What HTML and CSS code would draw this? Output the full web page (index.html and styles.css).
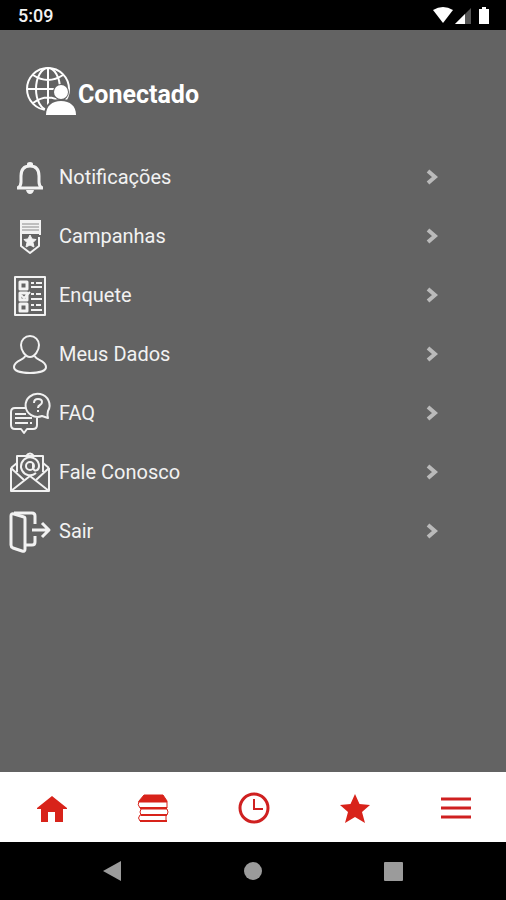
FILE: index.html
```html
<!DOCTYPE html>
<html lang="pt-BR">
<head>
  <meta charset="UTF-8" />
  <meta name="viewport" content="width=device-width, initial-scale=1.0"/>
  <title>Conectado</title>
  <link rel="stylesheet" href="styles.css">
</head>
<body>
  <div class="status-bar">
    <span class="time">5:09</span>
    <svg class="status-icons" width="58" height="20" viewBox="0 0 58 20" fill="#fff">
      <path d="M0 5Q10-1 20 5L10 18z" />
      <path d="M38 3v16H22z" fill="#555" />
      <path d="M32 9v10H22z" />
      <path d="M46 4h3V2h4v2h3v15H46z" />
    </svg>
  </div>

  <main>
    <header class="brand">
      <svg width="50" height="50" viewBox="0 0 50 50" fill="none" stroke="#fff" stroke-width="2">
        <circle cx="22" cy="23" r="21" />
        <ellipse cx="22" cy="23" rx="12" ry="21" />
        <path d="M22 2v42M1 23h42M7 9q15 10 30 0M7 37q15-11 30 0" />
        <circle cx="35" cy="26" r="8" fill="#636363" stroke="none" />
        <path d="M18 50c0-11 6-17 17-17s16 6 16 17z" fill="#636363" stroke="none" />
        <circle cx="35" cy="26" r="7" fill="#fff" stroke="none" />
        <path d="M20 49c0-9 6-14 15-14s15 5 15 14z" fill="#fff" stroke="none" />
      </svg>
      <h1>Conectado</h1>
    </header>

    <nav class="menu">
      <a class="menu-item" href="#notificacoes">
        <svg class="menu-icon" viewBox="0 0 40 40">
          <path d="M8 31q3-2 3-6v-6C11 12 14 9 20 9s9 3 9 10v6q0 4 3 6" stroke-width="3" />
          <path d="M7 31h26" stroke-width="3" />
          <path d="M17 9V7q0-2 3-2t3 2v2zM16 33h8q-1 4-4 4t-4-4z" fill="#f2f2f2" stroke="none" />
        </svg>
        <span>Notificações</span>
        <svg class="chevron" viewBox="0 0 12 16"><path d="M2 2l7 6-7 6" /></svg>
      </a>
      <a class="menu-item" href="#campanhas">
        <svg class="menu-icon" viewBox="0 0 40 40">
          <path d="M10 4h21v14H10z" fill="#f2f2f2" stroke="none" />
          <path d="M12 8h17M12 11h17M12 14h17" stroke="#8a8a8a" stroke-width="1" />
          <path d="M11 17v13l9 7 9-7v-9M30 16v3" />
          <path d="M20 19l2 4 4 .5-3 3 1 4.500-4-2-4 2 1-4.500-3-3 4-.5z" fill="#f2f2f2" stroke-width="1" />
        </svg>
        <span>Campanhas</span>
        <svg class="chevron" viewBox="0 0 12 16"><path d="M2 2l7 6-7 6" /></svg>
      </a>
      <a class="menu-item" href="#enquete">
        <svg class="menu-icon" viewBox="0 0 40 40">
          <rect x="5" y="2" width="30" height="38" />
          <path d="M10 7h7v7h-7zM10 18h7v7h-7zM10 29h7v7h-7z" stroke-width="3" />
          <path d="M11 20l3 3 6-6" />
          <path d="M21 8h3M26 8h6M21 12h11M21 19h3M26 19h5M21 24h11M21 30h3M26 30h5M21 35h11" />
        </svg>
        <span>Enquete</span>
        <svg class="chevron" viewBox="0 0 12 16"><path d="M2 2l7 6-7 6" /></svg>
      </a>
      <a class="menu-item" href="#meus-dados">
        <svg class="menu-icon" viewBox="0 0 40 40">
          <path d="M20 2c5 0 9 4 9 9s-4 12-9 12-9-7-9-12 4-9 9-9z" />
          <path d="M15 22c0 4-11 4-11 11 0 4 7 6 16 6s16-2 16-6c0-7-11-7-11-11" />
        </svg>
        <span>Meus Dados</span>
        <svg class="chevron" viewBox="0 0 12 16"><path d="M2 2l7 6-7 6" /></svg>
      </a>
      <a class="menu-item" href="#faq">
        <svg class="menu-icon" viewBox="0 0 40 40">
          <path d="M16 15H5q-4 0-4 4v13q0 4 4 4h6l3 4 3-4h6q4 0 4-4v-7" />
          <path d="M5 21h11M5 25h17M5 30h13M20 30h2" />
          <path d="M38 18q-1 4 0 7l-6-2a12 11.500 0 1 1 6-5z" />
          <path d="M24 10q0-4 4-4t4 3q0 2-2 3t-2 3M28 17v2" />
        </svg>
        <span>FAQ</span>
        <svg class="chevron" viewBox="0 0 12 16"><path d="M2 2l7 6-7 6" /></svg>
      </a>
      <a class="menu-item" href="#fale-conosco">
        <svg class="menu-icon" viewBox="0 0 40 40">
          <path d="M1 16v23h38V16M1 16l13 12M39 16L26 28" />
          <path d="M1 39l19-15 19 15M1 16l6-5M39 16l-6-5" />
          <path d="M7 20V4h26v16M16 4q4-5 8 0" />
          <path d="M26 21a9 9 0 1 1 3-7c0 5-5 6-6 2v-5" />
          <circle cx="20" cy="14" r="4" />
        </svg>
        <span>Fale Conosco</span>
        <svg class="chevron" viewBox="0 0 12 16"><path d="M2 2l7 6-7 6" /></svg>
      </a>
      <a class="menu-item" href="#sair">
        <svg class="menu-icon icon-bold" viewBox="0 0 40 40">
          <path d="M4 3l10 3q1 0 1 2v30q0 3-3 2L3 37q-2-1-2-3V5q0-3 3-2z" />
          <path d="M4 2h18q3 0 3 3v8M16 34h6q3 0 3-3v-6M22 19h16M32 12l7 7-7 7" />
        </svg>
        <span>Sair</span>
        <svg class="chevron" viewBox="0 0 12 16"><path d="M2 2l7 6-7 6" /></svg>
      </a>
    </nav>
  </main>

  <nav class="tab-bar">
    <button type="button" aria-label="Início">
      <svg viewBox="0 0 32 32"><path d="M16 4L1 16v1h4v13h7V20h7v10h8V17h4v-1z" fill="#d8231a" /></svg>
    </button>
    <button type="button" aria-label="Biblioteca">
      <svg viewBox="0 0 32 32" fill="none" stroke="#d8231a" stroke-width="1">
        <path d="M7 3h19l4 6v1H2v-1z" fill="#d8231a" />
        <path d="M2 9q-2 4 1 7h26M30 10v6M4 17h26q2 3 0 6H4q-2-3 0-6zM29 23H3q-3 3 0 6h26M29 23v6" />
        <path d="M3 16h27M4 23h26M3 29h27" stroke-width="2" />
      </svg>
    </button>
    <button type="button" aria-label="Histórico">
      <svg viewBox="0 0 32 32" fill="none" stroke="#cf2020" stroke-width="3">
        <circle cx="16" cy="16" r="14" />
        <path d="M16 7v10h9" stroke-width="2" />
      </svg>
    </button>
    <button type="button" aria-label="Favoritos">
      <svg viewBox="0 0 32 32"><path d="M16 2l4.500 10L31 13l-8 7 3 11-10-6-10 6 3-11-8-7 10.500-1z" fill="#d8231a" /></svg>
    </button>
    <button type="button" aria-label="Menu">
      <svg viewBox="0 0 32 32" stroke="#cf2020" stroke-width="3"><path d="M1 7h30M1 16h30M1 25h30" /></svg>
    </button>
  </nav>

  <div class="system-bar">
    <button type="button" aria-label="Voltar">
      <svg viewBox="0 0 20 20"><path d="M19 0v20L1 10z" /></svg>
    </button>
    <button type="button" aria-label="Tela inicial">
      <svg viewBox="0 0 20 20"><circle cx="10" cy="10" r="9" /></svg>
    </button>
    <button type="button" aria-label="Recentes">
      <svg viewBox="0 0 20 20"><rect x="0" y="1" width="19" height="19" rx="1" /></svg>
    </button>
  </div>
</body>
</html>
```

FILE: styles.css
```css
* {
  box-sizing: border-box;
}

body {
  display: flex;
  flex-direction: column;
  min-height: 100vh;
  margin: 0;
  font-family: Roboto, sans-serif;
  color: #f2f2f2;
  background-color: #636363;
}

svg {
  display: block;
  flex-shrink: 0;
}

/* Status bar */
.status-bar {
  display: flex;
  align-items: center;
  justify-content: space-between;
  height: 30px;
  padding: 0 15px 0 18px;
  background-color: #000;
}

.time {
  font-size: 18px;
  font-weight: 500;
}

/* Logo */
main {
  flex: 1;
}

.brand {
  display: flex;
  align-items: center;
  gap: 2px;
  padding: 36px 26px 31px;
}

.brand h1 {
  margin: 8px 0 0;
  font-size: 25px;
  line-height: 30px;
  color: #fff;
}

/* Menu list */
.menu-item {
  display: flex;
  align-items: center;
  gap: 9px;
  height: 59px;
  padding: 0 68px 0 10px;
  font-size: 20px;
  color: inherit;
  text-decoration: none;
}

.menu-icon {
  width: 40px;
  height: 40px;
  overflow: visible;
  fill: none;
  stroke: #f2f2f2;
  stroke-width: 2;
  stroke-linejoin: round;
}

.icon-bold {
  stroke-width: 3;
}

.chevron {
  width: 12px;
  height: 16px;
  margin-left: auto;
  fill: none;
  stroke: #bababa;
  stroke-width: 4;
}

/* Bottom tabs */
button {
  display: flex;
  align-items: center;
  justify-content: center;
  padding: 0;
  border: none;
  background: none;
  cursor: pointer;
}

.tab-bar {
  display: flex;
  height: 70px;
  padding: 2px 0 0 2px;
  background-color: #fff;
}

.tab-bar button {
  flex: 1;
}

.tab-bar svg {
  width: 32px;
  height: 32px;
}

/* Android buttons */
.system-bar {
  display: flex;
  height: 58px;
  padding: 0 42px;
  background-color: #000;
}

.system-bar button {
  flex: 1;
}

.system-bar svg {
  width: 20px;
  height: 20px;
  fill: #9b9b9b;
}
```
